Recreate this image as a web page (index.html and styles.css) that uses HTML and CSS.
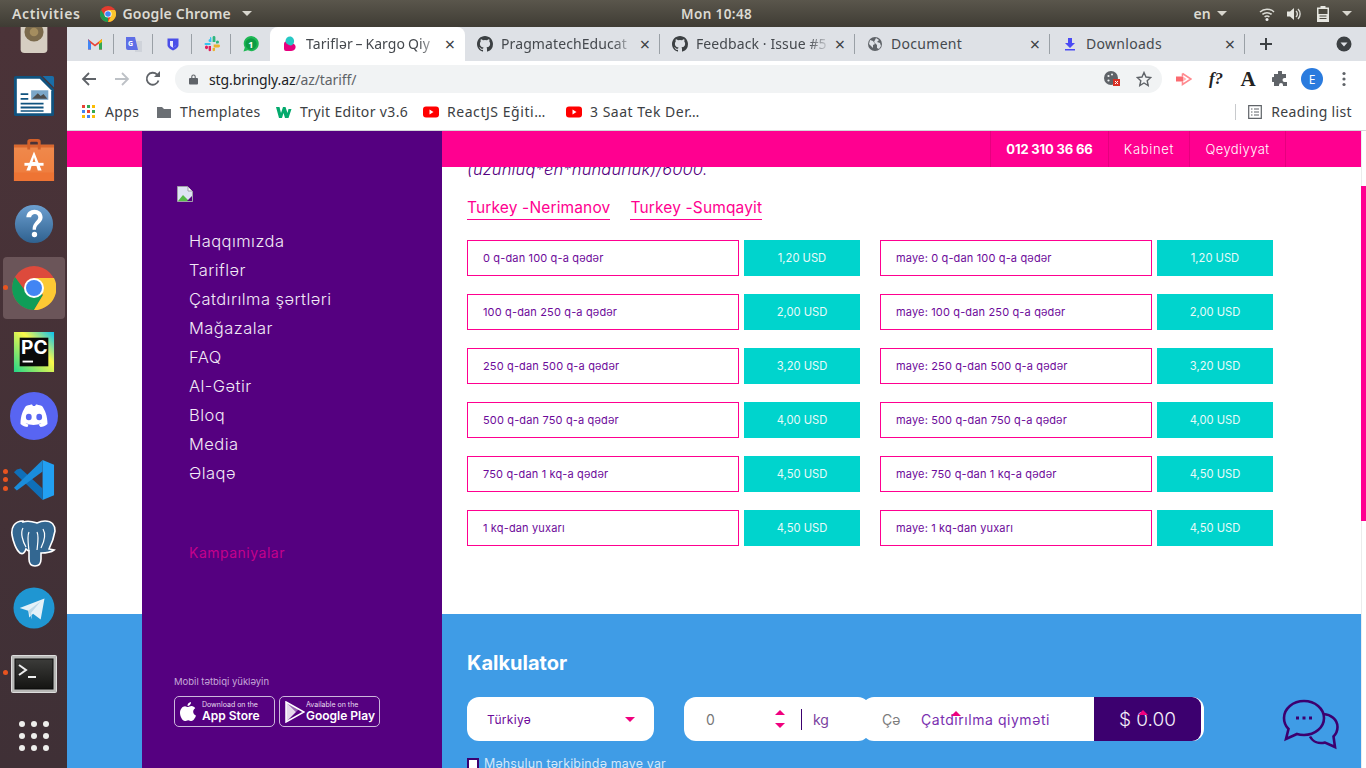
FILE: index.html
```html
<!DOCTYPE html>
<html lang="az">
<head>
<meta charset="utf-8">
<title>Tariflər</title>
<link rel="stylesheet" href="styles.css">
</head>
<body>
<div class="desk">
  <header class="topbar">
    <div class="tb-left">
      <span class="tb-text tb-activities">Activities</span>
      <span class="tb-app">
        <svg class="i16" viewBox="0 0 16 16"><circle cx="8" cy="8" r="8" fill="#e33b2e"/><path d="M8 8 1 12a8 8 0 0 0 7 4z" fill="#1a9c50"/><path d="M8 4h7a8 8 0 0 1-7 12l3-6z" fill="#fbc52d"/><path d="M1 12a8 8 0 0 1 0-8l4 6z" fill="#1a9c50"/><circle cx="8" cy="8" r="3.600" fill="#fff"/><circle cx="8" cy="8" r="2.800" fill="#4285f4"/></svg>
        <span class="tb-text tb-chrome">Google Chrome</span><span class="caret"></span>
      </span>
    </div>
    <span class="tb-text clock">Mon 10:48</span>
    <div class="tb-right">
      <span class="tb-text">en</span><span class="caret caret-en"></span>
      <svg class="i16" viewBox="0 0 16 16"><path d="M1 6a10 10 0 0 1 14 0M3.400 8.400a7 7 0 0 1 9.200 0M5.600 10.800a4 4 0 0 1 4.800 0" fill="none" stroke="#dcdcd6" stroke-width="1.500"/><circle cx="8" cy="13.500" r="1.500" fill="#eee"/></svg>
      <svg class="i16" viewBox="0 0 16 16"><path d="M1 5.500h3L8 2v12l-4-3.500H1z" fill="#e6e6e0"/><path d="M10 5a4 4 0 0 1 0 6M12 3a7 7 0 0 1 0 10" fill="none" stroke="#dcdcd6" stroke-width="1.400"/></svg>
      <svg class="i16 tb-batt" viewBox="0 0 16 16"><path d="M5.500 0h5v1.500H14V16H2V1.500h3.500z" fill="#e6e6e0"/><path d="M3.500 3h9v5h-9z" fill="#4d4a40"/><path d="M4.500 10h7M4.500 12.500h7" stroke="#4d4a40" stroke-width="1"/></svg>
      <span class="caret caret-sys"></span>
    </div>
  </header>

  <div class="under">
    <nav class="dock">
      <div class="dock-item dock-speaker"><svg viewBox="0 0 44 44" class="d44"><path d="M8 10h28v30q0 4-4 4H12q-4 0-4-4z" fill="#d6cec2"/><circle cx="22" cy="22" r="10" fill="#7b6a4c"/><circle cx="22" cy="22" r="4.500" fill="#a48d5f"/></svg></div>
      <div class="dock-item"><svg viewBox="0 0 44 44" class="d44"><path d="M1 3a2 2 0 0 1 2-2h26l14 14v26a2 2 0 0 1-2 2H3a2 2 0 0 1-2-2z" fill="#10537f"/><path d="M31 1h10a2 2 0 0 1 2 2v10z" fill="#1a6ea8"/><path d="M4 4h24l12 12v24H4z" fill="#fff"/><path d="M19 16h18v10H19z" fill="#7ba7c9"/><path d="M20 25l6-6 3 3 3-2 4 5z" fill="#4d4d4d"/><path d="M8 19h8v2H8zM8 24h8v2H8zM8 29h24v2H8zM8 33h24v2H8zM8 37h24v1.500H8z" fill="#10537f"/></svg></div>
      <div class="dock-item"><svg viewBox="0 0 44 44" class="d44"><defs><linearGradient id="bag" x1="0" y1="0" x2="0" y2="1"><stop offset="0" stop-color="#ef8a4d"/><stop offset="1" stop-color="#ef7a3a"/></linearGradient></defs><path d="M1 6h42v38H1z" fill="url(#bag)"/><path d="M1 6h42v3H1z" fill="#d9682f"/><path d="M1 35h42v9H1z" fill="#ee7434"/><path d="M15 11V3q0-3 3-3h8q3 0 3 3v8h-3V4q0-1-1-1h-6q-1 0-1 1v7z" fill="#d2602a"/><path d="M22 13l-8 20h4l1.500-5h5l1.500 5h4zM20.500 24l1.500-5 1.500 5z" fill="#fff"/><path d="M12 25h20v3H12z" fill="#fff"/></svg></div>
      <div class="dock-item"><svg viewBox="0 0 44 44" class="d44"><defs><linearGradient id="hg" x1="0" y1="0" x2="0" y2="1"><stop offset="0" stop-color="#6c9fd0"/><stop offset="1" stop-color="#2f618f"/></linearGradient></defs><circle cx="22" cy="22" r="20" fill="url(#hg)"/><path d="M14 15c0-5 4-8 8.500-8S31 10 31 15c0 6-7 7-7 13h-3.500c0-8 6-9 6-13 0-2-1.500-3.500-3.500-3.500S19 13 19 15z" fill="#fff"/><circle cx="22.500" cy="33" r="2.800" fill="#fff"/></svg></div>
      <div class="dock-item dock-active"><svg viewBox="0 0 44 44" class="d44"><circle cx="22" cy="22" r="22" fill="#dd4a3c"/><path d="M3 11a22 22 0 0 0 19 33l9-15-9-7-8 4z" fill="#0f9d58"/><path d="M22 12h20a22 22 0 0 1-20 32l9-15z" fill="#fcc934"/><circle cx="22" cy="22" r="10" fill="#fff"/><circle cx="22" cy="22" r="8" fill="#4285f4"/></svg></div>
      <div class="dock-item"><svg viewBox="0 0 44 44" class="d44"><defs><linearGradient id="pc" x1="0" y1="1" x2="1" y2="0"><stop offset="0" stop-color="#21d789"/><stop offset=".6" stop-color="#fcf84a"/><stop offset="1" stop-color="#07c3f2"/></linearGradient></defs><path d="M1 1h42v42H1z" fill="url(#pc)"/><path d="M7 7h30v30H7z" fill="#0a0a0a"/><path d="M10 31h11v2H10z" fill="#fff"/><text x="8.500" y="24" class="pc-letters">PC</text></svg></div>
      <div class="dock-item"><svg viewBox="0 0 48 48" class="d48"><circle cx="24" cy="24" r="24" fill="#5865f2"/><path d="M16 14c3-1 5-1.500 6-1.500l1 1.500h2l1-1.500c1 0 3 .5 6 1.500 3 4 5.500 10 5.500 18-2 2-5 3-7 3l-2-2.500c1-.3 2-.8 3-1.500-5 2.500-11 2.500-16 0 1 .7 2 1.200 3 1.500L17.500 35c-2 0-5-1-7-3 0-8 2.500-14 5.500-18z" fill="#fff"/><ellipse cx="18.800" cy="25" rx="2.900" ry="3.200" fill="#5865f2"/><ellipse cx="29.200" cy="25" rx="2.900" ry="3.200" fill="#5865f2"/></svg></div>
      <div class="dock-item dock-run3"><i></i><i></i><i></i><svg viewBox="0 0 44 44" class="d44"><path d="M31 1 43 6v32l-12 5z" fill="#22a0f2"/><path d="M31 43V31L8 10 4 11 1 14z" fill="#0f6fb8"/><path d="M31 1v12L4 33 1 30z" fill="#1a8ddb"/></svg></div>
      <div class="dock-item"><svg viewBox="0 0 46 48" class="d46"><path d="M12 1C3 1 0 8 1 15c1 6 4 15 8 18 3 2 5-1 6-4 1 1 2 2 3 2l0 8c0 4 2 7 6 7s6-3 6-7v-6c3 0 9 0 13-3l-5-1c2-4 5-12 6-18 0-6-3-10-10-10-4 0-6 1-8 2-3-1-8-3-14-1z" fill="#336791" stroke="#fff" stroke-width="1.600"/><path d="M12 8c-3 5 0 14 3 19M32 9c3 5 1 13-2 19M18 12c-2 4-1 10 0 19M26 12c2 4 1 10 0 18" fill="none" stroke="#fff" stroke-width="1.200"/></svg></div>
      <div class="dock-item"><svg viewBox="0 0 44 44" class="d44"><circle cx="22" cy="22" r="21.500" fill="#1f96d2"/><path d="M7 22l26-10-4 22-8-6-4 4-1-7z" fill="#e4f1f8"/><path d="M16 25l13-10-10 12 1 7z" fill="#bcd9e9"/></svg></div>
      <div class="dock-item dock-run1"><i></i><svg viewBox="0 0 46 38" class="d46s"><defs><linearGradient id="term" x1="0" y1="0" x2="0" y2="1"><stop offset="0" stop-color="#3c3c3a"/><stop offset="1" stop-color="#141412"/></linearGradient></defs><rect x=".5" y=".5" width="45" height="37" rx="1" fill="#b8b8b6" stroke="#ddd"/><rect x="4" y="4" width="38" height="30" fill="url(#term)" stroke="#0a0a0a"/><path d="M8 10l7 5-7 5" fill="none" stroke="#eee" stroke-width="2"/><path d="M17 21h8v2h-8z" fill="#eee"/></svg></div>
      <div class="dock-grid"><span></span><span></span><span></span><span></span><span></span><span></span><span></span><span></span><span></span></div>
    </nav>

    <div class="browser">
      <div class="tabstrip">
        <div class="pins">
          <span class="pin"><svg class="i16" viewBox="0 0 16 16"><path d="M1 13.500V3l7 5.500L15 3v10.500h-3V7.500L8 10.500 4 7.500v6z" fill="#ea4335"/><path d="M1 13.500h3v-6L1 3z" fill="#4285f4"/><path d="M12 13.500h3V5l-3 2.500z" fill="#34a853"/><path d="M15 3v3l-3 2V5.500z" fill="#fbbc04"/></svg></span>
          <span class="pin"><svg class="i16" viewBox="0 0 16 16"><path d="M9 5h7v11H9z" fill="#cfd3da"/><path d="M0 1h9l3 13H2a2 2 0 0 1-2-2z" fill="#5e6ee6"/><text x="2" y="10" class="g-letter">G</text></svg></span>
          <span class="pin"><svg class="i16" viewBox="0 0 16 16"><path d="M2.500 2.500h11v6.500c0 2.500-3 4.500-5.500 5.500-2.500-1-5.500-3-5.500-5.500z" fill="#4a4ee8"/><path d="M5 5h6v4c0 1-1.500 2-3 2.700C6.500 11 5 10 5 9z" fill="#e8e9ff"/><path d="M8 5h3v4c0 1-1.500 2-3 2.700z" fill="#4a4ee8"/></svg></span>
          <span class="pin"><svg class="i16" viewBox="0 0 16 16"><path d="M6 1a1.400 1.400 0 0 1 1.400 1.400v3.600H6A1.500 1.500 0 0 1 6 3z" fill="#36c5f0"/><path d="M1.500 7h5v2h-5a1 1 0 0 1 0-2z" fill="#36c5f0"/><path d="M8.600 1.500a1.400 1.400 0 0 1 2.800 0V6H8.600z" fill="#2eb67d"/><path d="M12 6a1.500 1.500 0 1 1 1.500 1.500H12z" fill="#2eb67d"/><path d="M9.600 8.600h5a1.400 1.400 0 0 1 0 2.800h-5z" fill="#ecb22e"/><path d="M8.600 12H11v2.500a1.400 1.400 0 0 1-2.400 0z" fill="#ecb22e"/><path d="M4.600 10H7v4.500a1.400 1.400 0 0 1-2.400 0z" fill="#e01e5a"/><path d="M2.500 9.600a1.500 1.500 0 0 1 1.500 1.500v1a1.500 1.500 0 0 1-3-1 1.500 1.500 0 0 1 1.500-1.500z" fill="#e01e5a"/></svg></span>
          <span class="pin pin-last"><svg class="i16" viewBox="0 0 16 16"><path d="M.5 15.500l1.300-4A7.500 7.500 0 1 1 4.800 14.300z" fill="#1fb855"/><circle cx="8" cy="8" r="5.700" fill="#0c9c45"/><text x="5.300" y="11.800" class="wa-num">1</text></svg></span>
        </div>
        <div class="tab tab-active">
          <svg class="i16" viewBox="0 0 16 16"><path d="M2 8c0-2 2-3 4-2.500l5 2c2 .8 3 2.500 2.500 4.500S11 15 9 15H4a2 2 0 0 1-2-2z" fill="#e6007e"/><path d="M3.500 5c0-2.500 2-4.500 4.500-4.500S12.500 3 12 6 9 10 7 9 3.500 7 3.500 5z" fill="#27c8c4"/></svg>
          <span class="tab-title tab-title-active">Tariflər – Kargo Qiy</span>
          <span class="tab-x">×</span>
        </div>
        <div class="tab">
          <svg class="i16" viewBox="0 0 16 16"><path fill="#3c4043" d="M8 0C3.580 0 0 3.580 0 8c0 3.540 2.290 6.530 5.470 7.590.4.070.55-.17.55-.38v-1.340c-2.220.48-2.690-1.070-2.690-1.070-.36-.92-.89-1.170-.89-1.170-.73-.5.050-.49.050-.49.800.06 1.230.830 1.230.830.710 1.220 1.870.870 2.330.660.070-.520.280-.870.510-1.070-1.780-.200-3.640-.890-3.640-3.950 0-.870.310-1.590.820-2.150-.080-.200-.360-1.020.080-2.120 0 0 .670-.210 2.200.820a7.600 7.600 0 0 1 4 0c1.530-1.040 2.200-.820 2.200-.820.440 1.100.160 1.920.080 2.120.510.560.820 1.270.820 2.150 0 3.070-1.870 3.750-3.650 3.950.290.250.540.730.540 1.480v2.190c0 .210.150.460.550.380A8.010 8.010 0 0 0 16 8c0-4.420-3.580-8-8-8z"/></svg>
          <span class="tab-title">PragmatechEducat</span>
          <span class="tab-x">×</span>
        </div>
        <div class="tab">
          <svg class="i16" viewBox="0 0 16 16"><path fill="#3c4043" d="M8 0C3.580 0 0 3.580 0 8c0 3.540 2.290 6.530 5.470 7.590.4.070.55-.17.55-.38v-1.340c-2.220.48-2.690-1.070-2.690-1.070-.36-.92-.89-1.170-.89-1.170-.73-.5.050-.49.050-.49.800.06 1.230.830 1.230.830.710 1.220 1.870.870 2.330.660.070-.520.280-.870.510-1.070-1.780-.200-3.640-.890-3.640-3.950 0-.870.310-1.590.820-2.150-.080-.200-.360-1.020.080-2.120 0 0 .670-.210 2.200.82a7.600 7.600 0 0 1 4 0c1.530-1.040 2.200-.82 2.200-.82.440 1.100.160 1.920.080 2.120.510.560.820 1.270.82 2.150 0 3.070-1.870 3.750-3.650 3.950.290.250.540.730.540 1.480v2.190c0 .210.150.460.550.380A8.010 8.010 0 0 0 16 8c0-4.420-3.580-8-8-8z"/></svg>
          <span class="tab-title">Feedback · Issue #5</span>
          <span class="tab-x">×</span>
        </div>
        <div class="tab">
          <svg class="i16" viewBox="0 0 16 16"><circle cx="8" cy="8" r="7" fill="#5f6368"/><path d="M3 4l3 1 2 3-2 1v3l-2-2-2-2zM9 2l3 2-2 2 3 1 1 3-2 3-2-1v-3L7 6z" fill="#dee1e6"/></svg>
          <span class="tab-title tab-title-plain">Document</span>
          <span class="tab-x">×</span>
        </div>
        <div class="tab">
          <svg class="i16" viewBox="0 0 16 16"><path d="M6 2h4v5h3l-5 5-5-5h3z" fill="#4a4af4"/><path d="M3 13h10v1.500H3z" fill="#4a4af4"/></svg>
          <span class="tab-title tab-title-plain">Downloads</span>
          <span class="tab-x">×</span>
        </div>
        <span class="new-tab"><svg class="i14" viewBox="0 0 14 14"><path d="M6 1h2v5h5v2H8v5H6V8H1V6h5z" fill="#3c4043"/></svg></span>
        <span class="tabs-menu"><svg class="i16" viewBox="0 0 16 16"><circle cx="8" cy="8" r="7.500" fill="#3c4043"/><path d="M4.500 6.500h7L8 10.500z" fill="#dee1e6"/></svg></span>
      </div>

      <div class="toolbar">
        <svg class="tool back" viewBox="0 0 16 16"><path d="M15 8H2M8 2 2 8l6 6" fill="none" stroke="#5f6368" stroke-width="1.800"/></svg>
        <svg class="tool fwd" viewBox="0 0 16 16"><path d="M1 8h13M8 2l6 6-6 6" fill="none" stroke="#bdc1c6" stroke-width="1.800"/></svg>
        <svg class="tool reload" viewBox="0 0 16 16"><path d="M13.500 9.500A6 6 0 1 1 12 3.500" fill="none" stroke="#5f6368" stroke-width="1.800"/><path d="M9 6h6V0z" fill="#5f6368"/></svg>
        <div class="omnibox">
          <svg class="lock" viewBox="0 0 10 12"><path d="M1 5h8a1 1 0 0 1 1 1v5a1 1 0 0 1-1 1H1a1 1 0 0 1-1-1V6a1 1 0 0 1 1-1zM2.500 5V3.500a2.500 2.500 0 0 1 5 0V5H6.300V3.500a1.300 1.300 0 0 0-2.600 0V5z" fill="#5f6368"/></svg>
          <span class="url"><span class="url-host">stg.bringly.az</span><span class="url-path">/az/tariff/</span></span>
          <span class="omni-end">
            <svg class="i16" viewBox="0 0 16 16"><circle cx="7" cy="7" r="7" fill="#5f6368"/><circle cx="4.500" cy="5" r="1.100" fill="#f1f3f4"/><circle cx="8" cy="3.500" r="1" fill="#f1f3f4"/><circle cx="4.500" cy="9.500" r="1.100" fill="#f1f3f4"/><path d="M9 8h7v7H9z" fill="#d93025"/><path d="M11 10l3 3m0-3-3 3" stroke="#fff"/></svg>
            <svg class="i16 star" viewBox="0 0 16 16"><path d="M8 1.500l2 4.500 4.800.5-3.600 3.200 1 4.800L8 12l-4.200 2.500 1-4.800L1.200 6.500 6 6z" fill="none" stroke="#5f6368" stroke-width="1.400"/></svg>
          </span>
        </div>
        <div class="exts">
          <svg class="i16" viewBox="0 0 16 16"><path d="M6.500 2.500 15 8l-8.500 5.500V10.500" fill="none" stroke="#ff8a8f" stroke-width="1.600"/><path d="M6.500 5.500V2.500" stroke="#ff8a8f" stroke-width="1.600"/><path d="M0 5.500h7v5H0z" fill="#fb6a70"/><path d="M7 5.500 10.500 8 7 10.500z" fill="#ffb3b6"/></svg>
          <span class="ext-f">f?</span>
          <span class="ext-a">A</span>
          <svg class="i16" viewBox="0 0 16 16"><path d="M6 1a2 2 0 0 1 4 0v2h4v4h-1.500a2 2 0 0 0 0 4H15v4h-4v-1a2 2 0 0 0-4 0v1H2v-4h-.500a2.500 2.500 0 0 1 0-5H2V3h4z" fill="#5f6368"/></svg>
          <span class="avatar">E</span>
          <svg class="kebab" viewBox="0 0 4 16"><circle cx="2" cy="2.500" r="1.600" fill="#5f6368"/><circle cx="2" cy="8" r="1.600" fill="#5f6368"/><circle cx="2" cy="13.500" r="1.600" fill="#5f6368"/></svg>
        </div>
      </div>

      <div class="bookmarks">
        <span class="bm bm-apps"><span class="apps-grid"><i class="r"></i><i class="g"></i><i class="y"></i><i class="b"></i><i class="r"></i><i class="g"></i><i class="y"></i><i class="b"></i><i class="y"></i></span>Apps</span>
        <span class="bm bm-themes"><svg class="i16" viewBox="0 0 16 16"><path d="M1 3h5l2 2h7v9H1z" fill="#6b6f74"/></svg>Themplates</span>
        <span class="bm bm-tryit"><svg class="i16" viewBox="0 0 16 16"><path d="M0 3h3.500l1.500 6 2-6h2.500l2 6 1-4h3l-3 9H9L7.500 9 6 14H3z" fill="#04aa6d"/></svg>Tryit Editor v3.6</span>
        <span class="bm bm-react"><svg class="i16" viewBox="0 0 16 16"><rect y="2.500" width="16" height="11" rx="3" fill="#f00"/><path d="M6.500 5.500v5l4-2.500z" fill="#fff"/></svg>ReactJS Eğiti…</span>
        <span class="bm bm-saat"><svg class="i16" viewBox="0 0 16 16"><rect y="2.500" width="16" height="11" rx="3" fill="#f00"/><path d="M6.500 5.500v5l4-2.500z" fill="#fff"/></svg>3 Saat Tek Der…</span>
        <span class="bm-right">
          <span class="bm-sep"></span>
          <svg class="i14 bm-list" viewBox="0 0 14 14"><path d="M.7.700h12.600v12.600H.7z" fill="none" stroke="#5f6368" stroke-width="1.200"/><path d="M3 4h1.500M6 4h5M3 7h1.500M6 7h5M3 10h1.500M6 10h5" stroke="#5f6368" stroke-width="1.200"/></svg>
          <span class="bm">Reading list</span>
        </span>
      </div>

      <div class="viewport">
        <main class="page">
          <div class="site-head">
            <span class="head-item head-phone">012 310 36 66</span>
            <span class="head-item head-cab">Kabinet</span>
            <span class="head-item head-reg">Qeydiyyat</span>
          </div>

          <aside class="side">
            <svg class="broken" viewBox="0 0 16 16"><path d="M.5.500h10l5 5v10H.5z" fill="#dfe3f4" stroke="#a0a0a8"/><path d="M11 1v4h4" fill="#fff" stroke="#a0a0a8"/><path d="M1 15l5-6 3 3 3 3z" fill="#56b947"/><path d="M10 15l5-5v5z" fill="#550080"/></svg>
            <ul class="side-menu">
              <li>Haqqımızda</li>
              <li>Tariflər</li>
              <li>Çatdırılma şərtləri</li>
              <li>Mağazalar</li>
              <li>FAQ</li>
              <li>Al-Gətir</li>
              <li>Bloq</li>
              <li>Media</li>
              <li>Əlaqə</li>
            </ul>
            <div class="side-promo">Kampaniyalar</div>
            <div class="side-app">
              <div class="app-label">Mobil tətbiqi yükləyin</div>
              <div class="stores">
                <div class="store">
                  <svg class="store-ico" viewBox="0 0 16 20"><path d="M11 0c.2 2-1.500 4-3.500 4C7.300 2 9 .2 11 0zM8 5c1 0 2-1 3.500-1 1.500 0 3 1 3.700 2.200-3 1.800-2.500 6 .8 7.300-.8 2.500-2.800 5.500-4.500 5.500-1.200 0-2-.8-3.300-.8s-2.200.8-3.300.8C2.500 19 0 14.500 0 11c0-4 2.500-6.800 5-6.800C6.200 4.200 7.200 5 8 5z" fill="#fff"/></svg>
                  <span class="store-txt"><small>Download on the</small><b>App Store</b></span>
                </div>
                <div class="store store-gp">
                  <svg class="store-play" viewBox="0 0 20 22"><path d="M1 1l18 10L1 21z" fill="none" stroke="#fff" stroke-width="1.500"/><path d="M1 1l10 10L1 21z" fill="#fff" fill-opacity=".85"/><path d="M1 1l13 7-3 3z" fill="#fff" fill-opacity=".4"/></svg>
                  <span class="store-txt"><small>Available on the</small><b>Google Play</b></span>
                </div>
              </div>
            </div>
          </aside>

          <section class="tariffs">
            <p class="note">(uzunluq*en*hündürlük)/6000.</p>
            <div class="routes">
              <span class="route">Turkey -Nerimanov</span>
              <span class="route">Turkey -Sumqayit</span>
            </div>
            <div class="price-grid">
              <div class="price-row"><span class="price-label">0 q-dan 100 q-a qədər</span><span class="price-val">1,20 USD</span></div>
              <div class="price-row"><span class="price-label">maye: 0 q-dan 100 q-a qədər</span><span class="price-val">1,20 USD</span></div>
              <div class="price-row"><span class="price-label">100 q-dan 250 q-a qədər</span><span class="price-val">2,00 USD</span></div>
              <div class="price-row"><span class="price-label">maye: 100 q-dan 250 q-a qədər</span><span class="price-val">2,00 USD</span></div>
              <div class="price-row"><span class="price-label">250 q-dan 500 q-a qədər</span><span class="price-val">3,20 USD</span></div>
              <div class="price-row"><span class="price-label">maye: 250 q-dan 500 q-a qədər</span><span class="price-val">3,20 USD</span></div>
              <div class="price-row"><span class="price-label">500 q-dan 750 q-a qədər</span><span class="price-val">4,00 USD</span></div>
              <div class="price-row"><span class="price-label">maye: 500 q-dan 750 q-a qədər</span><span class="price-val">4,00 USD</span></div>
              <div class="price-row"><span class="price-label">750 q-dan 1 kq-a qədər</span><span class="price-val">4,50 USD</span></div>
              <div class="price-row"><span class="price-label">maye: 750 q-dan 1 kq-a qədər</span><span class="price-val">4,50 USD</span></div>
              <div class="price-row"><span class="price-label">1 kq-dan yuxarı</span><span class="price-val">4,50 USD</span></div>
              <div class="price-row"><span class="price-label">maye: 1 kq-dan yuxarı</span><span class="price-val">4,50 USD</span></div>
            </div>
          </section>

          <section class="calc">
            <h2 class="calc-title">Kalkulator</h2>
            <div class="calc-row">
              <div class="calc-select"><span>Türkiyə</span><i class="tri-down"></i></div>
              <div class="calc-weight">
                <span class="calc-zero">0</span>
                <span class="spin"><i class="tri-up"></i><i class="tri-down"></i></span>
                <span class="calc-unit">kg</span>
              </div>
              <div class="calc-result">
                <span class="calc-ghost">Çə</span>
                <span class="calc-name">Çatdırılma qiyməti<i class="tri-up tri-over"></i></span>
                <span class="calc-sum">$ 0.00<i class="tri-up tri-over2"></i></span>
              </div>
              <svg class="chat" viewBox="0 0 56 48"><path d="M21 1C10 1 1 8.500 1 18c0 4 1.500 8 4.500 11L3 39l11-5c2 .7 4.500 1 7 1 11 0 20-7.500 20-17S32 1 21 1z" fill="none" stroke="#3c006f" stroke-width="2.600"/><path d="M40.500 14c7 .5 14 5 14 13 0 4-1.500 7-4 9.500L52 47l-10-4.500c-6 1.500-12-.5-15-6" fill="none" stroke="#3c006f" stroke-width="2.600"/><path d="M13 16.500h3v3h-3zM19.500 16.500h3v3h-3zM26 16.500h3v3h-3z" fill="#3c006f"/></svg>
            </div>
            <label class="calc-check"><span class="box"></span>Məhsulun tərkibində maye var</label>
          </section>
        </main>
        <div class="scroller"><span class="thumb"></span></div>
      </div>
    </div>
  </div>
</div>
</body>
</html>
```
FILE: styles.css
```css
* { box-sizing: border-box; }
html, body { margin: 0; height: 100%; overflow: hidden; }
body { font-family: "Noto Sans", sans-serif; }
ul { list-style: none; margin: 0; padding: 0; }
svg { display: block; flex: none; }
.i16 { width: 16px; height: 16px; }
.i14 { width: 14px; height: 14px; }

.desk { width: 1366px; height: 768px; display: flex; flex-direction: column; }

/* Ubuntu top bar */
.topbar { height: 27px; flex: none; display: flex; align-items: center; padding: 0 14px 0 12px;
  background: linear-gradient(#5a564c, #3f3c34); }
.tb-text { color: #dcdad2; font-size: 14px; font-weight: 600; letter-spacing: .2px; white-space: nowrap; }
.tb-activities { letter-spacing: .6px; }
.tb-chrome { letter-spacing: .2px; }
.tb-left { width: 669px; display: flex; align-items: center; gap: 20px; }
.tb-app { display: flex; align-items: center; gap: 6px; }
.clock { font-size: 13.500px; letter-spacing: .4px; }
.tb-right { margin-left: auto; display: flex; align-items: center; gap: 11px; }
.tb-batt { margin-left: 2px; }
.caret { width: 0; height: 0; border: 5px solid transparent; border-top: 5px solid #d8d6ce; border-bottom: 0; margin-left: 5px; }
.caret-en { margin-left: -5px; margin-right: 21px; }
.caret-sys { margin-left: 0; }

.under { flex: 1; display: flex; min-height: 0; }

/* Dock */
.dock { width: 67px; flex: none; display: flex; flex-direction: column; align-items: center; background: linear-gradient(#4b3338, #3f3036); overflow: hidden; }
.dock-item { width: 62px; height: 64px; display: flex; align-items: center; justify-content: center; flex: none; position: relative; }
.dock-item.dock-speaker { height: 37px; align-items: flex-end; padding-bottom: 11px; }
.d44 { width: 42px; height: 42px; }
.d48 { width: 48px; height: 48px; }
.d46 { width: 46px; height: 48px; }
.d46s { width: 46px; height: 38px; margin-top: 4px; }
.dock-active { background: #6b5559; border-radius: 4px; height: 62px; margin: 1px 0; }
.dock-active::before { content: ""; position: absolute; left: 0; top: 28px; width: 5px; height: 5px; border-radius: 50%; background: #e95420; }
.dock-active .d44 { width: 44px; height: 44px; }
.dock-run3 i, .dock-run1 i { position: absolute; left: 0; width: 5px; height: 5px; border-radius: 50%; background: #e95420; }
.dock-run1 i { top: 30px; }
.dock-run3 i:nth-child(1) { top: 21px; }
.dock-run3 i:nth-child(2) { top: 29px; }
.dock-run3 i:nth-child(3) { top: 38px; }
.pc-letters { font: 700 20px "Inter", sans-serif; fill: #fff; }
.dock-grid { display: grid; grid-template-columns: repeat(3, 6px); gap: 6px; margin-top: 17px; flex: none; }
.dock-grid span { width: 6px; height: 6px; border-radius: 50%; background: #eeeeec; }

.browser { flex: 1; min-width: 0; display: flex; flex-direction: column; }

/* Tabs */
.tabstrip { height: 34px; flex: none; background: #dee1e6; display: flex; align-items: flex-end; }
.pins { display: flex; align-items: center; height: 34px; padding-left: 8px; width: 203px; flex: none; }
.pin { width: 39px; height: 34px; display: flex; align-items: center; justify-content: center; position: relative; }
.pin::after { content: ""; position: absolute; right: 0; top: 7px; height: 20px; width: 1px; background: #9aa0a6; }
.pin-last::after { display: none; }
.g-letter { font: 700 7px "Noto Sans", sans-serif; fill: #fff; }
.wa-num { font: 700 9px "Noto Sans", sans-serif; fill: #fff; }
.tab { width: 195px; height: 34px; flex: none; display: flex; align-items: center; padding: 0 9px 0 12px; gap: 8px; color: #45494e; font-size: 14px; position: relative; }
.tab::after { content: ""; position: absolute; right: 0; top: 7px; height: 20px; width: 1px; background: #9aa0a6; }
.tab-active { background: #fff; border-radius: 8px 8px 0 0; }
.tab-active::after { display: none; }
.tab-title { flex: 1; min-width: 0; white-space: nowrap; overflow: hidden; margin-top: -2px; letter-spacing: .1px;
  -webkit-mask-image: linear-gradient(90deg, #000 84%, transparent 100%); mask-image: linear-gradient(90deg, #000 84%, transparent 100%); }
.tab-title-active { word-spacing: -1px; }
.tab-title-plain { letter-spacing: .3px; -webkit-mask-image: none; mask-image: none; }
.tab-x { font-size: 18px; line-height: 1; color: #3c4043; width: 12px; text-align: center; flex: none; margin-left: -4px; }
.new-tab { margin-left: 14px; height: 34px; display: flex; align-items: center; }
.tabs-menu { margin-left: auto; margin-right: 14px; height: 34px; display: flex; align-items: center; }

/* Toolbar */
.toolbar { height: 34px; flex: none; background: #fff; display: flex; align-items: center; padding: 2px 0 0 14px; }
.tool { width: 16px; height: 16px; }
.fwd { margin-left: 17px; }
.reload { margin-left: 15px; }
.omnibox { margin-left: 14px; width: 987px; height: 28px; flex: none; background: #f1f3f4; border-radius: 14px; display: flex; align-items: center; padding: 0 10px 0 14px; }
.lock { width: 9px; height: 12px; }
.url { margin-left: 11px; font-size: 14px; color: #202124; letter-spacing: -.1px; }
.url-path { color: #5f6368; }
.omni-end { margin-left: auto; display: flex; align-items: center; gap: 16px; }
.exts { display: flex; align-items: center; margin-left: 14px; gap: 16px; }
.ext-f { width: 16px; font: italic 700 17px "Liberation Serif", serif; color: #222; text-align: center; white-space: nowrap; }
.ext-a { width: 16px; font: 700 21px "Liberation Serif", serif; color: #222; text-align: center; line-height: 1; }
.avatar { width: 22px; height: 22px; border-radius: 50%; background: #2a7bde; color: #fff; font-size: 12px; display: flex; align-items: center; justify-content: center; margin: 0 -3px; flex: none; }
.kebab { width: 4px; height: 16px; margin-left: 6px; }

/* Bookmarks */
.bookmarks { height: 36px; flex: none; background: #fff; display: flex; align-items: center; padding: 0 0 2px 14px; border-bottom: 1px solid #d4d6d9; }
.bm { display: flex; align-items: center; gap: 8px; font-size: 14px; color: #3c4043; white-space: nowrap; letter-spacing: .35px; flex: none; }
.bm-apps { width: 75px; gap: 10px; }
.apps-grid { display: grid; grid-template-columns: repeat(3, 3px); gap: 2px; width: 13px; margin-left: 1px; }
.apps-grid i { width: 3px; height: 3px; display: block; }
.apps-grid .r { background: #ea4335; }
.apps-grid .g { background: #34a853; }
.apps-grid .y { background: #fbbc04; }
.apps-grid .b { background: #4285f4; }
.bm-themes { width: 120px; }
.bm-tryit { width: 147px; }
.bm-react { width: 143px; letter-spacing: .55px; }
.bm-saat { letter-spacing: .5px; }
.bm-right { margin-left: auto; display: flex; align-items: center; gap: 12px; padding-right: 14px; }
.bm-list { margin-right: -3px; }
.bm-sep { width: 1px; height: 16px; background: #c8cacd; }

/* Viewport */
.viewport { flex: 1; min-height: 0; display: flex; overflow: hidden; background: #fff; }
.scroller { width: 5px; flex: none; background: #fff; padding-top: 55px; box-shadow: inset 1px 0 #ececec; }
.thumb { display: block; height: 335px; background: #ff0090; }
.page { flex: 1; min-width: 0; display: grid; grid-template-columns: 75px 300px 1fr; grid-template-rows: 36px 447px 1fr; font-family: "Inter", sans-serif; overflow: hidden; }

.site-head { grid-column: 1 / -1; grid-row: 1; background: #ff0090; display: flex; justify-content: flex-end; padding-right: 75px; }
.head-item { display: flex; align-items: center; justify-content: center; font-size: 13px; color: #fff; font-weight: 300; border-left: 1px solid #e6007e; white-space: nowrap; }
.head-cab { width: 81px; letter-spacing: .7px; }
.head-reg { width: 97px; letter-spacing: .4px; border-right: 1px solid #e6007e; }
.head-phone { width: 118px; font-weight: 700; letter-spacing: -.15px; }

.side { grid-column: 2; grid-row: 1 / 4; background: #550080; z-index: 2; display: flex; flex-direction: column; padding: 55px 0 0 35px; }
.broken { width: 16px; height: 16px; }
.side-menu { margin: 25px 0 0 12px; }
.side-menu li { height: 29px; line-height: 29px; font-size: 16.500px; color: #f2eaf6; font-weight: 300; letter-spacing: .45px; white-space: nowrap; }
.side-promo { margin: 55px 0 0 12px; color: #c4008c; font-size: 14px; letter-spacing: .5px; line-height: 20px; }
.side-app { margin: 113px 0 0 -3px; }
.app-label { font-size: 9.500px; color: #c6a9d8; line-height: 12px; }
.stores { display: flex; gap: 4px; margin-top: 8px; }
.store { width: 101px; height: 31px; border: 1px solid #cdb7dc; border-radius: 5px; display: flex; align-items: center; padding-left: 5px; gap: 6px; flex: none; }
.store-gp { gap: 1px; }
.store-ico { width: 16px; height: 20px; }
.store-play { width: 20px; height: 22px; }
.store-txt { display: flex; flex-direction: column; color: #fff; }
.store-txt small { font-size: 7px; line-height: 8px; color: #e8dcf0; font-weight: 400; white-space: nowrap; }
.store-txt b { font-size: 12px; line-height: 13px; font-weight: 600; white-space: nowrap; }

.tariffs { grid-column: 3; grid-row: 2; overflow: hidden; padding-left: 25px; background: #fff; }
.note { margin: -7px 0 0; font-size: 16.500px; line-height: 18px; font-style: italic; color: #550080; font-weight: 300; letter-spacing: .15px; white-space: nowrap; }
.routes { display: flex; gap: 20px; margin-top: 19px; }
.route { color: #ff0090; font-size: 15.500px; line-height: 21px; height: 23px; letter-spacing: .15px; border-bottom: 1px solid #ff0090; white-space: nowrap; }
.price-grid { display: grid; grid-template-columns: 393px 393px; column-gap: 20px; row-gap: 18px; margin-top: 20px; }
.price-row { display: flex; gap: 5px; height: 36px; }
.price-label { flex: 1; border: 1px solid #ff0090; color: #6d0a9a; font-size: 11px; letter-spacing: .15px; display: flex; align-items: center; padding-left: 15px; white-space: nowrap; }
.price-val { width: 116px; flex: none; background: #00d4cd; color: #e8fbfa; font-size: 11.200px; display: flex; align-items: center; justify-content: center; }

.calc { grid-column: 1 / -1; grid-row: 3; background: #3f9ce6; padding: 0 0 0 400px; }
.calc-title { margin: 37px 0 0; font-size: 20px; line-height: 24px; font-weight: 700; color: #fff; }
.calc-row { display: flex; margin-top: 22px; height: 44px; align-items: center; }
.calc-select { width: 187px; height: 44px; flex: none; background: #fff; border-radius: 12px; display: flex; align-items: center; justify-content: space-between; padding: 0 19px 0 20px; color: #6d0a9a; font-size: 12px; letter-spacing: .3px; }
.tri-down { display: block; width: 0; height: 0; border: 5px solid transparent; border-top: 5px solid #f0007e; border-bottom: 0; }
.tri-up { display: block; width: 0; height: 0; border: 5px solid transparent; border-bottom: 5px solid #f0007e; border-top: 0; }
.calc-weight { width: 186px; height: 44px; flex: none; margin-left: 30px; background: #fff; border-radius: 12px; display: flex; align-items: center; padding-left: 22px; color: #777; font-size: 14px; }
.calc-zero { width: 69px; }
.spin { display: flex; flex-direction: column; gap: 8px; width: 26px; }
.calc-unit { border-left: 1px solid #3c006f; padding-left: 11px; height: 21px; line-height: 21px; color: #7a3fa0; font-size: 14px; }
.calc-result { width: 342px; height: 44px; flex: none; margin-left: -8px; background: #fff; border-radius: 12px; display: flex; align-items: center; padding-left: 20px; z-index: 1; border-right: 3px solid #fff; }
.calc-ghost { color: #7c7c7c; font-size: 14px; width: 39px; flex: none; }
.calc-name { color: #7a2fb0; font-size: 14px; width: 173px; flex: none; position: relative; letter-spacing: .55px; white-space: nowrap; }
.calc-sum { width: 107px; height: 44px; flex: none; background: #3c006f; color: #f4eefa; font-size: 19px; font-weight: 300; display: flex; align-items: center; justify-content: center; border-radius: 0 9px 9px 0; position: relative; }
.tri-over { position: absolute; left: 30px; top: 0; }
.tri-over2 { position: absolute; left: 44px; top: 13px; }
.chat { width: 56px; height: 48px; margin: 10px 0 0 79px; overflow: visible; }
.calc-check { display: flex; align-items: center; margin-top: 16px; gap: 5px; color: #d4e8f9; font-size: 12.400px; line-height: 14px; letter-spacing: .2px; white-space: nowrap; }
.box { width: 12px; height: 12px; background: #fff; border: 2px solid #3c006f; flex: none; }
```
